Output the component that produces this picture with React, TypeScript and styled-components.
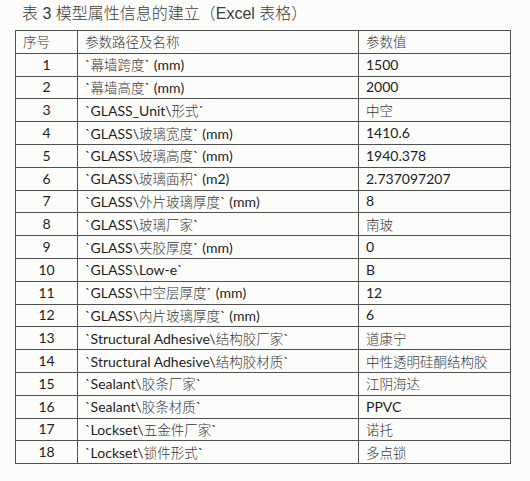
import styled, { createGlobalStyle } from "styled-components";

const GlobalStyle = createGlobalStyle`
  html, body {
    margin: 0;
    padding: 0;
    background: #fcfcfa;
  }
`;

const Page = styled.div`
  width: 530px;
  height: 481px;
  padding: 5px 0 0 15px;
  box-sizing: border-box;
  background: #fcfcfa;
  color: #1e1e1e;
  font-family: Lato, "Noto Sans CJK SC", sans-serif;
`;

const Caption = styled.div`
  height: 25px;
  padding-left: 7px;
  font-family: "Liberation Sans", "Noto Sans CJK SC", sans-serif;
  font-size: 16px;
  font-weight: 300;
  line-height: 18px;
  color: #3c3c3c;
`;

const Sheet = styled.table`
  width: 495px;
  border-collapse: collapse;
  table-layout: fixed;
`;

const Cell = styled.td<{ $center?: boolean }>`
  height: 21.8px;
  padding: 0 0 0 ${(p) => (p.$center ? "0" : "7px")};
  border: 1px solid #505050;
  text-align: ${(p) => (p.$center ? "center" : "left")};
  font-size: 14px;
  line-height: 20px;
  white-space: nowrap;
  overflow: hidden;
  vertical-align: middle;
`;

const HeadCell = styled(Cell)`
  color: #555;
`;

const Han = styled.span`
  font-family: "Noto Sans CJK SC", sans-serif;
  font-weight: 300;
  font-size: 13.5px;
  color: #3a3a3a;
`;

type Row = { name: [string, string?, string?]; value: string; hanValue?: boolean };

// name = [latin prefix, chinese part, latin suffix]
const rows: Row[] = [
  { name: ["`", "幕墙跨度", "` (mm)"], value: "1500" },
  { name: ["`", "幕墙高度", "` (mm)"], value: "2000" },
  { name: ["`GLASS_Unit\\", "形式", "`"], value: "中空", hanValue: true },
  { name: ["`GLASS\\", "玻璃宽度", "` (mm)"], value: "1410.6" },
  { name: ["`GLASS\\", "玻璃高度", "` (mm)"], value: "1940.378" },
  { name: ["`GLASS\\", "玻璃面积", "` (m2)"], value: "2.737097207" },
  { name: ["`GLASS\\", "外片玻璃厚度", "` (mm)"], value: "8" },
  { name: ["`GLASS\\", "玻璃厂家", "`"], value: "南玻", hanValue: true },
  { name: ["`GLASS\\", "夹胶厚度", "` (mm)"], value: "0" },
  { name: ["`GLASS\\Low-e`"], value: "B" },
  { name: ["`GLASS\\", "中空层厚度", "` (mm)"], value: "12" },
  { name: ["`GLASS\\", "内片玻璃厚度", "` (mm)"], value: "6" },
  { name: ["`Structural Adhesive\\", "结构胶厂家", "`"], value: "道康宁", hanValue: true },
  { name: ["`Structural Adhesive\\", "结构胶材质", "`"], value: "中性透明硅酮结构胶", hanValue: true },
  { name: ["`Sealant\\", "胶条厂家", "`"], value: "江阴海达", hanValue: true },
  { name: ["`Sealant\\", "胶条材质", "`"], value: "PPVC" },
  { name: ["`Lockset\\", "五金件厂家", "`"], value: "诺托", hanValue: true },
  { name: ["`Lockset\\", "锁件形式", "`"], value: "多点锁", hanValue: true },
];

export default function App() {
  return (
    <Page>
      <GlobalStyle />
      <Caption>表 3 模型属性信息的建立（Excel 表格）</Caption>
      <Sheet>
        <colgroup>
          <col style={{ width: 62 }} />
          <col style={{ width: 281 }} />
          <col style={{ width: 152 }} />
        </colgroup>
        <tbody>
          <tr>
            <HeadCell>
              <Han>序号</Han>
            </HeadCell>
            <HeadCell>
              <Han>参数路径及名称</Han>
            </HeadCell>
            <HeadCell>
              <Han>参数值</Han>
            </HeadCell>
          </tr>
          {rows.map((r, i) => (
            <tr key={i}>
              <Cell $center>{i + 1}</Cell>
              <Cell>
                {r.name[0]}
                {r.name[1] && <Han>{r.name[1]}</Han>}
                {r.name[2]}
              </Cell>
              <Cell>{r.hanValue ? <Han>{r.value}</Han> : r.value}</Cell>
            </tr>
          ))}
        </tbody>
      </Sheet>
    </Page>
  );
}
